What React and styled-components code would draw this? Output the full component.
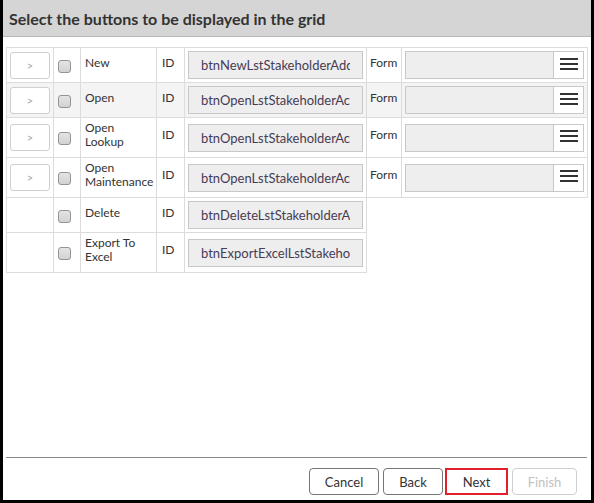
import React from "react";
import styled, { createGlobalStyle } from "styled-components";

const GlobalStyle = createGlobalStyle`
  html, body {
    margin: 0;
    padding: 0;
    background: #fff;
  }
  body {
    font-family: Lato, "Open Sans", sans-serif;
    color: #333;
  }
`;

const buttons = [
  { label: "New", id: "btnNewLstStakeholderAdd", form: true },
  { label: "Open", id: "btnOpenLstStakeholderAction", form: true, hover: true },
  { label: "Open\nLookup", id: "btnOpenLstStakeholderAction", form: true },
  { label: "Open\nMaintenance", id: "btnOpenLstStakeholderAction", form: true },
  { label: "Delete", id: "btnDeleteLstStakeholderAdd", form: false },
  { label: "Export To\nExcel", id: "btnExportExcelLstStakeholderAdd", form: false },
];

const colWidths = [47, 27, 76, 28, 182, 35, 186];

const MenuIcon = () => (
  <svg width="18" height="12" viewBox="0 0 18 12">
    <rect x="0" y="0" width="18" height="2" fill="#333" />
    <rect x="0" y="5" width="18" height="2" fill="#333" />
    <rect x="0" y="10" width="18" height="2" fill="#333" />
  </svg>
);

const App = () => {
  return (
    <>
      <GlobalStyle />
      <Dialog>
        <Header>
          <Title>Select the buttons to be displayed in the grid</Title>
        </Header>
        <Body>
          <Grid>
            <colgroup>
              {colWidths.map((w, i) => (
                <col key={i} style={{ width: w }} />
              ))}
            </colgroup>
            <tbody>
              {buttons.map((b, i) => (
                <Row key={i} $hover={b.hover}>
                  {b.form ? (
                    <OrderCell>
                      <OrderButton>&gt;</OrderButton>
                    </OrderCell>
                  ) : (
                    <OrderCell />
                  )}
                  <CheckCell>
                    <Check />
                  </CheckCell>
                  <TextCell>{b.label}</TextCell>
                  <TextCell $pad={5}>ID</TextCell>
                  <FieldCell>
                    <Field>
                      <FieldText>{b.id}</FieldText>
                    </Field>
                  </FieldCell>
                  {b.form && <TextCell $pad={3}>Form</TextCell>}
                  {b.form && (
                    <FieldCell>
                      <Picker>
                        <PickerValue />
                        <PickerButton>
                          <MenuIcon />
                        </PickerButton>
                      </Picker>
                    </FieldCell>
                  )}
                </Row>
              ))}
            </tbody>
          </Grid>
        </Body>
        <Footer>
          <ActionButton $w={70} $gap={4}>Cancel</ActionButton>
          <ActionButton $w={60} $gap={2}>Back</ActionButton>
          <ActionButton $w={63} $gap={4} $focused>Next</ActionButton>
          <ActionButton $w={65} disabled>Finish</ActionButton>
        </Footer>
      </Dialog>
    </>
  );
};

export default App;

const Dialog = styled.div`
  box-sizing: border-box;
  width: 594px;
  height: 503px;
  border: 3px solid #000;
  border-top: none;
  display: flex;
  flex-direction: column;
  background: #fff;
`;

const Header = styled.div`
  height: 36px;
  background: #d5d5d5;
  border-bottom: 1px solid #b8b8b8;
  display: flex;
  align-items: center;
  padding-left: 6px;
`;

const Title = styled.h1`
  margin: 0;
  font-size: 16px;
  font-weight: 700;
  color: #333;
`;

const Body = styled.div`
  flex: 1;
  padding: 10px 4px 0 3px;
`;

const Grid = styled.table`
  table-layout: fixed;
  width: 581px;
  border-collapse: collapse;
  font-size: 12px;
  color: #333;
`;

const Row = styled.tr`
  td {
    background: ${(p) => (p.$hover ? "#f4f4f4" : "#fff")};
  }
`;

const Cell = styled.td`
  border: 1px solid #dcdcdc;
  vertical-align: middle;
`;

const OrderCell = styled(Cell)`
  padding: 3px 3px;
`;

const OrderButton = styled.div`
  box-sizing: border-box;
  width: 40px;
  height: 27px;
  border: 1px solid #cfcfcf;
  border-radius: 3px;
  background: #fff;
  color: #a8a8a8;
  font-size: 11px;
  display: flex;
  align-items: center;
  justify-content: center;
`;

const CheckCell = styled(Cell)`
  padding: 2px 4px 0;
`;

const Check = styled.span`
  display: block;
  box-sizing: border-box;
  width: 13px;
  height: 13px;
  border: 1px solid #959595;
  border-radius: 3px;
  background: linear-gradient(#e4e4e4, #d2d2d2);
`;

const TextCell = styled(Cell)`
  padding: 3px ${(p) => p.$pad || 4}px 8px;
  line-height: 14px;
  white-space: pre-line;
`;

const FieldCell = styled(Cell)`
  padding: 3px 3px;
`;

const Field = styled.div`
  box-sizing: border-box;
  height: 28px;
  border: 1px solid #c8c8c8;
  background: #eeeeee;
  padding: 0 12px;
  display: flex;
  align-items: center;
  font-size: 13px;
  color: #473c54;
`;

const FieldText = styled.span`
  display: block;
  overflow: hidden;
  white-space: nowrap;
  width: 100%;
`;

const Picker = styled.div`
  box-sizing: border-box;
  height: 28px;
  border: 1px solid #c8c8c8;
  display: flex;
`;

const PickerValue = styled.div`
  flex: 1;
  background: #eeeeee;
`;

const PickerButton = styled.div`
  width: 30px;
  border-left: 1px solid #c8c8c8;
  background: #fff;
  display: flex;
  align-items: center;
  justify-content: center;
  padding-bottom: 3px;
  box-sizing: border-box;
`;

const Footer = styled.div`
  margin: 0 4px 0 3px;
  border-top: 1px solid #8a8a8a;
  padding: 10px 10px 5px;
  display: flex;
  justify-content: flex-end;
`;

const ActionButton = styled.button`
  box-sizing: border-box;
  width: ${(p) => p.$w}px;
  height: 27px;
  margin-right: ${(p) => p.$gap || 0}px;
  padding: 0;
  background: #fff;
  border: ${(p) => (p.$focused ? "2px solid #e0202a" : "1px solid #767676")};
  border-radius: ${(p) => (p.$focused ? "0" : "4px")};
  font-family: Lato, "Open Sans", sans-serif;
  font-size: 13px;
  color: #333;

  &:disabled {
    border-color: #cfcfcf;
    color: #c2c2c2;
  }
`;
